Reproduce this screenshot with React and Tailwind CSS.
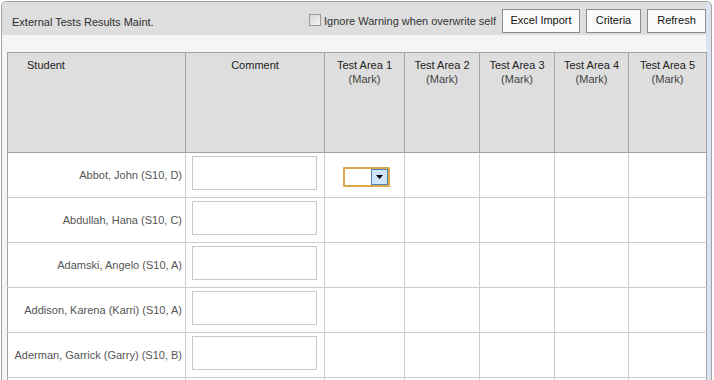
import React from "react";

const students = [
  "Abbot, John (S10, D)",
  "Abdullah, Hana (S10, C)",
  "Adamski, Angelo (S10, A)",
  "Addison, Karena (Karri) (S10, A)",
  "Aderman, Garrick (Garry) (S10, B)",
  "",
];

const areas = ["Test Area 1", "Test Area 2", "Test Area 3", "Test Area 4", "Test Area 5"];

const MarkSelect = () => (
  <div className="inline-flex h-[20px] w-[47px] border-2 border-[#d9a94a] bg-white rounded-[1px]">
    <div className="flex-1" />
    <div className="flex w-[17px] items-center justify-center border border-[#4f84b8] bg-[#cfe5fb]">
      <svg width="7" height="4" viewBox="0 0 7 4">
        <path d="M0 0h7L3.5 4z" fill="#000" />
      </svg>
    </div>
  </div>
);

const App = () => {
  return (
    <div
      className="h-[380px] w-[714px] overflow-hidden bg-white pl-[1px] pt-[1px] text-[11px]"
      style={{ fontFamily: '"Liberation Sans", Arial, sans-serif' }}
    >
      <div className="flex h-[420px] w-[711px] rounded-t-[5px] border border-[#a3a3a3] bg-[#dae4f0]">
        <div className="flex w-[704px] flex-col">
          {/* header bar */}
          <div className="flex h-[33px] shrink-0 items-center bg-[#dedede] pl-[10px] pt-[4px] rounded-tl-[4px]">
            <p className="mt-[3px] text-[#2e2e2e]">External Tests Results Maint.</p>
            <div className="ml-auto flex items-center">
              <span className="mb-[2px] mr-[3px] h-[12px] w-[12px] border border-[#9a9a9a] bg-gradient-to-br from-[#d8d8d8] to-[#f4f4f4]" />
              <span className="mr-[6px] mt-[1px] text-[#333]">Ignore Warning when overwrite self</span>
              <button className="mr-[6px] h-[24px] w-[78px] border border-[#8c8c8c] bg-[#fbfbfb] text-[#111]">
                Excel Import
              </button>
              <button className="mr-[6px] h-[24px] w-[55px] border border-[#8c8c8c] bg-[#fbfbfb] text-[#111]">
                Criteria
              </button>
              <button className="h-[24px] w-[59px] border border-[#8c8c8c] bg-[#fbfbfb] text-[#111]">
                Refresh
              </button>
            </div>
          </div>

          {/* body */}
          <div className="flex-1 bg-[#f5f5f5] pl-[5px] pt-[17px]">
            <table className="w-[699px] table-fixed border-collapse bg-white">
              <colgroup>
                <col className="w-[178px]" />
                <col className="w-[139px]" />
                <col className="w-[80px]" />
                <col className="w-[75px]" />
                <col className="w-[75px]" />
                <col className="w-[74px]" />
                <col className="w-[78px]" />
              </colgroup>
              <thead>
                <tr className="h-[100px] bg-[#dedede] text-[#222]">
                  <th className="border border-[#a3a3a3] pl-[19px] pt-[5px] text-left align-top font-normal leading-[14px]">
                    Student
                  </th>
                  <th className="border border-[#a3a3a3] pt-[5px] align-top font-normal leading-[14px]">
                    Comment
                  </th>
                  {areas.map((a) => (
                    <th
                      key={a}
                      className="border border-[#a3a3a3] pt-[5px] align-top font-normal leading-[14px]"
                    >
                      {a}
                      <br />
                      <span className="text-[#444]">(Mark)</span>
                    </th>
                  ))}
                </tr>
              </thead>
              <tbody>
                {students.map((s, i) => (
                  <tr key={i} className="h-[45px]">
                    <td className="border border-l-[#a3a3a3] border-[#cccccc] pr-[3px] text-right align-middle text-[#555]">
                      {s}
                    </td>
                    <td className="border border-[#cccccc] pl-[6px] pt-[3px] align-top">
                      {s ? <div className="h-[34px] w-[125px] border border-[#c8c8c8] bg-white" /> : null}
                    </td>
                    {areas.map((a, j) => (
                      <td
                        key={a}
                        className={
                          j === 4
                            ? "border border-[#cccccc] border-r-[#a3a3a3]"
                            : "border border-[#cccccc] pl-[18px] pt-[14px] align-top"
                        }
                      >
                        {i === 0 && j === 0 ? <MarkSelect /> : null}
                      </td>
                    ))}
                  </tr>
                ))}
              </tbody>
            </table>
          </div>
        </div>
      </div>
    </div>
  );
};

export default App;
